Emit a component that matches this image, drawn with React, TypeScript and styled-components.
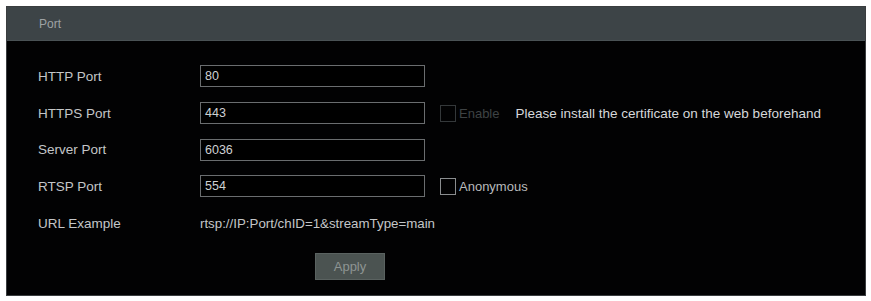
import styled, { createGlobalStyle } from 'styled-components';

const GlobalStyle = createGlobalStyle`
  body {
    margin: 0;
    background: #ffffff;
    font-family: 'Liberation Sans', Arial, sans-serif;
  }
`;

const Page = styled.div`
  padding: 6px 5px 3px 6px;
`;

const Panel = styled.div`
  background: #020203;
  border: 1px solid #3a3d3f;
  height: 290px;
  box-sizing: border-box;
  display: flex;
  flex-direction: column;
`;

const Header = styled.div`
  height: 33px;
  background: #3d4447;
  display: flex;
  align-items: center;
  padding-left: 32px;
  color: #9ea2a4;
  font-size: 12px;
  border-bottom: 1px solid #4a5255;
`;

const Form = styled.div`
  padding: 17px 0 0 31px;
  display: flex;
  flex-direction: column;
`;

const Row = styled.div`
  display: flex;
  align-items: center;
  height: 36.7px;
`;

const Label = styled.div`
  width: 162px;
  color: #c4c6c8;
  font-size: 13.5px;
`;

const Input = styled.div`
  width: 225px;
  height: 22px;
  box-sizing: border-box;
  border: 1px solid #6a6d6f;
  background: #000;
  color: #cfd1d3;
  font-size: 12.5px;
  display: flex;
  align-items: center;
  padding-left: 4px;
`;

const Check = styled.div<{ $dim?: boolean }>`
  width: 16px;
  height: 17px;
  box-sizing: border-box;
  border: 1px solid ${(p) => (p.$dim ? '#34383a' : '#8a8d8f')};
  margin-left: 15px;
  margin-right: 3px;
`;

const CheckText = styled.span<{ $dim?: boolean }>`
  color: ${(p) => (p.$dim ? '#3e4244' : '#b8babc')};
  font-size: 13px;
`;

const Note = styled.span`
  color: #d6d8da;
  font-size: 13.5px;
  margin-left: 16px;
`;

const Value = styled.span`
  color: #c4c6c8;
  font-size: 13.3px;
`;

const Actions = styled.div`
  display: flex;
  padding-left: 277px;
  margin-top: 12px;
`;

const Button = styled.div`
  width: 70px;
  height: 27px;
  background: #4b5351;
  border: 1px solid #5a6260;
  box-sizing: border-box;
  color: #8e9593;
  font-size: 13px;
  display: flex;
  align-items: center;
  justify-content: center;
`;

export default function App() {
  return (
    <>
      <GlobalStyle />
      <Page>
        <Panel>
          <Header>Port</Header>
          <Form>
            <Row>
              <Label>HTTP Port</Label>
              <Input>80</Input>
            </Row>
            <Row>
              <Label>HTTPS Port</Label>
              <Input>443</Input>
              <Check $dim />
              <CheckText $dim>Enable</CheckText>
              <Note>Please install the certificate on the web beforehand</Note>
            </Row>
            <Row>
              <Label>Server Port</Label>
              <Input>6036</Input>
            </Row>
            <Row>
              <Label>RTSP Port</Label>
              <Input>554</Input>
              <Check />
              <CheckText>Anonymous</CheckText>
            </Row>
            <Row>
              <Label>URL Example</Label>
              <Value>rtsp://IP:Port/chID=1&amp;streamType=main</Value>
            </Row>
            <Actions>
              <Button>Apply</Button>
            </Actions>
          </Form>
        </Panel>
      </Page>
    </>
  );
}
